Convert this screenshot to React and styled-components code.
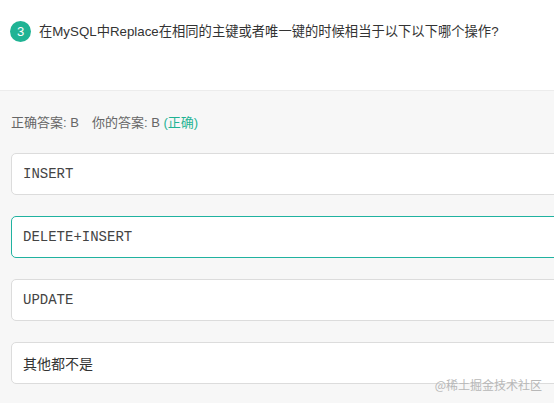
import React from 'react';
import styled, { createGlobalStyle } from 'styled-components';

const GlobalStyle = createGlobalStyle`
  html, body {
    margin: 0;
    padding: 0;
    background: #f7f7f7;
    overflow: hidden;
  }
  body {
    font-family: "Liberation Sans", "Noto Sans CJK SC", sans-serif;
  }
`;

const Page = styled.div`
  position: relative;
  width: 554px;
  height: 403px;
  overflow: hidden;
  background: #f7f7f7;
`;

const QuestionHeader = styled.div`
  display: flex;
  align-items: flex-start;
  gap: 8px;
  height: 91px;
  box-sizing: border-box;
  padding: 21px 0 0 10px;
  background: #fff;
  border-bottom: 1px solid #ececec;
`;

const Badge = styled.span`
  display: inline-flex;
  align-items: center;
  justify-content: center;
  width: 21px;
  height: 21px;
  border-radius: 50%;
  background: #1fb394;
  color: #fff;
  font-size: 13px;
  flex-shrink: 0;
`;

const QuestionText = styled.span`
  font-size: 13.3px;
  line-height: 21px;
  color: #333;
`;

const Body = styled.div`
  padding: 22px 0 0 11px;
`;

const ResultLine = styled.div`
  display: flex;
  gap: 13px;
  font-size: 13px;
  line-height: 20px;
  color: #666;
  margin-bottom: 20px;
`;

const Correct = styled.span`
  color: #1fb394;
`;

const OptionList = styled.div`
  display: flex;
  flex-direction: column;
  gap: 21px;
`;

const Option = styled.div`
  display: flex;
  align-items: center;
  width: 600px;
  height: 42px;
  box-sizing: border-box;
  padding-left: 11px;
  background: #fff;
  border: 1px solid ${(p) => (p.$selected ? '#20b2a0' : '#dcdcdc')};
  border-radius: 5px;
  color: ${(p) => (p.$mono ? '#444' : '#333')};
  font-size: 14px;
  font-family: ${(p) =>
    p.$mono ? '"Liberation Mono", monospace' : '"Noto Sans CJK SC", sans-serif'};
`;

const Watermark = styled.span`
  position: absolute;
  right: 12px;
  bottom: 10px;
  font-size: 12px;
  color: #b8b8b8;
  font-family: "Noto Sans CJK SC", sans-serif;
`;

const options = [
  { text: 'INSERT', mono: true },
  { text: 'DELETE+INSERT', mono: true, selected: true },
  { text: 'UPDATE', mono: true },
  { text: '其他都不是', mono: false },
];

export default function App() {
  return (
    <Page>
      <GlobalStyle />
      <QuestionHeader>
        <Badge>3</Badge>
        <QuestionText>在MySQL中Replace在相同的主键或者唯一键的时候相当于以下以下哪个操作?</QuestionText>
      </QuestionHeader>
      <Body>
        <ResultLine>
          <span>正确答案: B</span>
          <span>
            你的答案: B <Correct>(正确)</Correct>
          </span>
        </ResultLine>
        <OptionList>
          {options.map((o) => (
            <Option key={o.text} $mono={o.mono} $selected={o.selected}>
              {o.text}
            </Option>
          ))}
        </OptionList>
      </Body>
      <Watermark>@稀土掘金技术社区</Watermark>
    </Page>
  );
}
